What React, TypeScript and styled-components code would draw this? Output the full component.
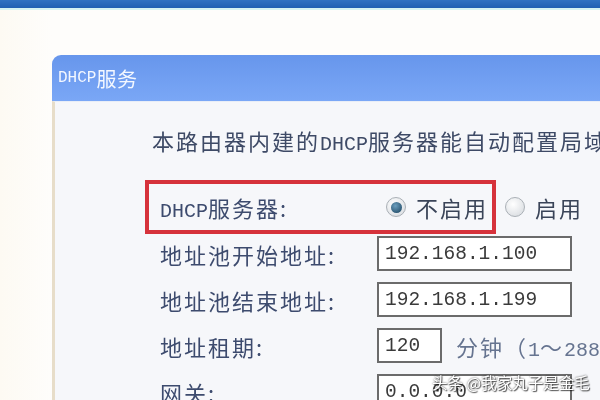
import React from "react";
import styled, { createGlobalStyle } from "styled-components";

const GlobalStyle = createGlobalStyle`
  html, body {
    margin: 0;
    padding: 0;
    width: 600px;
    height: 400px;
    overflow: hidden;
    background: #fefdfb;
  }
  * { box-sizing: border-box; }
`;

const CJK = `"Noto Sans CJK SC", "Noto Sans", sans-serif`;
const MONO = `"Liberation Mono", "DejaVu Sans Mono", monospace`;

const Page = styled.div`
  position: relative;
  width: 600px;
  height: 400px;
  display: flex;
  flex-direction: column;
  overflow: hidden;
  font-family: ${CJK};
  filter: blur(0.45px);
`;

const TopBar = styled.div`
  height: 10px;
  flex-shrink: 0;
  background: linear-gradient(#3172c2, #2160b2);
  border-bottom: 2px solid #d6f2f2;
`;

const Main = styled.div`
  flex: 1;
  display: flex;
  padding: 45px 0 0 52px;
  background: linear-gradient(90deg, #fdfaf3 0, #fefdfb 52px);
`;

const Panel = styled.section`
  width: 700px;
  flex-shrink: 0;
  display: flex;
  flex-direction: column;
`;

const PanelHeader = styled.header`
  height: 46px;
  display: flex;
  align-items: center;
  padding-left: 6px;
  border-radius: 9px 9px 0 0;
  background: linear-gradient(#6796ec, #7aa7f6);
  color: #f4f8ff;
  font-size: 20px;
  letter-spacing: 0.5px;
`;

const Latin = styled.span<{ $size?: number }>`
  font-family: ${MONO};
  font-size: ${({ $size }) => $size ?? 20}px;
  letter-spacing: 0;
`;

const PanelBody = styled.div`
  flex: 1;
  display: flex;
  flex-direction: column;
  padding: 24px 0 0 105px;
  background: #f6f7fa;
  border-left: 3px solid #e7ddc9;
  border-top: 1px solid #e9eef7;
`;

const Description = styled.p`
  margin: 0 0 21px -8px;
  line-height: 28px;
  font-size: 22px;
  letter-spacing: 2px;
  color: #3e4a66;
  white-space: nowrap;
`;

const Label = styled.span`
  width: 217px;
  flex-shrink: 0;
  font-size: 22px;
  letter-spacing: 2px;
  color: #3d4b6e;
  white-space: nowrap;
`;

const ServerRow = styled.div`
  display: flex;
  align-items: center;
`;

const Highlight = styled.div`
  display: flex;
  align-items: center;
  height: 54px;
  margin-left: -15px;
  padding: 0 4px 0 11px;
  border: 4px solid #d6323b;
`;

const Option = styled.label`
  display: flex;
  align-items: center;
  gap: 10px;
  margin-left: 9px;
  font-size: 22px;
  letter-spacing: 2px;
  color: #3a4458;
  white-space: nowrap;
`;

const Radio = styled.span<{ $checked?: boolean }>`
  width: 20px;
  height: 20px;
  border-radius: 50%;
  display: flex;
  align-items: center;
  justify-content: center;
  border: 1px solid #aab0b6;
  background: radial-gradient(circle at 40% 35%, #ffffff, #d3d7dc);

  &::after {
    content: "";
    width: 11px;
    height: 11px;
    border-radius: 50%;
    display: ${({ $checked }) => ($checked ? "block" : "none")};
    background: radial-gradient(circle at 40% 35%, #6c9fbf, #173f5a);
  }
`;

const Fields = styled.div`
  display: flex;
  flex-direction: column;
  gap: 11px;
  margin-top: 2px;
`;

const FieldRow = styled.div`
  display: flex;
  align-items: center;
  height: 35px;
`;

const Input = styled.div<{ $width: number }>`
  width: ${({ $width }) => $width}px;
  height: 35px;
  display: flex;
  align-items: center;
  padding-left: 6px;
  background: #ffffff;
  border: 2px solid #6b6b6b;
  font-family: ${MONO};
  font-size: 19.5px;
  color: #3a3a3a;
`;

const Hint = styled.span`
  margin-left: 14px;
  font-size: 22px;
  letter-spacing: 2px;
  color: #667490;
  white-space: nowrap;
`;

const Watermark = styled.div`
  position: absolute;
  left: 432px;
  top: 371px;
  font-family: ${CJK};
  font-size: 15.5px;
  color: #ffffff;
  white-space: nowrap;
  text-shadow: 0 0 2px rgba(0, 0, 0, 0.75), 1px 1px 1px rgba(0, 0, 0, 0.6);
`;

const fields = [
  { label: "地址池开始地址:", value: "192.168.1.100", width: 195 },
  { label: "地址池结束地址:", value: "192.168.1.199", width: 195 },
  { label: "地址租期:", value: "120", width: 65, hint: true },
  { label: "网关:", value: "0.0.0.0", width: 195 },
];

const App: React.FC = () => {
  return (
    <Page>
      <GlobalStyle />
      <TopBar />
      <Main>
        <Panel>
          <PanelHeader>
            <Latin $size={16}>DHCP</Latin>服务
          </PanelHeader>
          <PanelBody>
            <Description>
              本路由器内建的<Latin>DHCP</Latin>服务器能自动配置局域网中各计算机的TCP/IP协议。
            </Description>
            <ServerRow>
              <Highlight>
                <Label>
                  <Latin>DHCP</Latin>服务器:
                </Label>
                <Option>
                  <Radio $checked />
                  不启用
                </Option>
              </Highlight>
              <Option>
                <Radio />
                启用
              </Option>
            </ServerRow>
            <Fields>
              {fields.map((f) => (
                <FieldRow key={f.label}>
                  <Label>{f.label}</Label>
                  <Input $width={f.width}>{f.value}</Input>
                  {f.hint && (
                    <Hint>
                      分钟（<Latin>1</Latin>～<Latin>2880</Latin>分钟）
                    </Hint>
                  )}
                </FieldRow>
              ))}
            </Fields>
          </PanelBody>
        </Panel>
      </Main>
      <Watermark>头条 @我家丸子是金毛</Watermark>
    </Page>
  );
};

export default App;
